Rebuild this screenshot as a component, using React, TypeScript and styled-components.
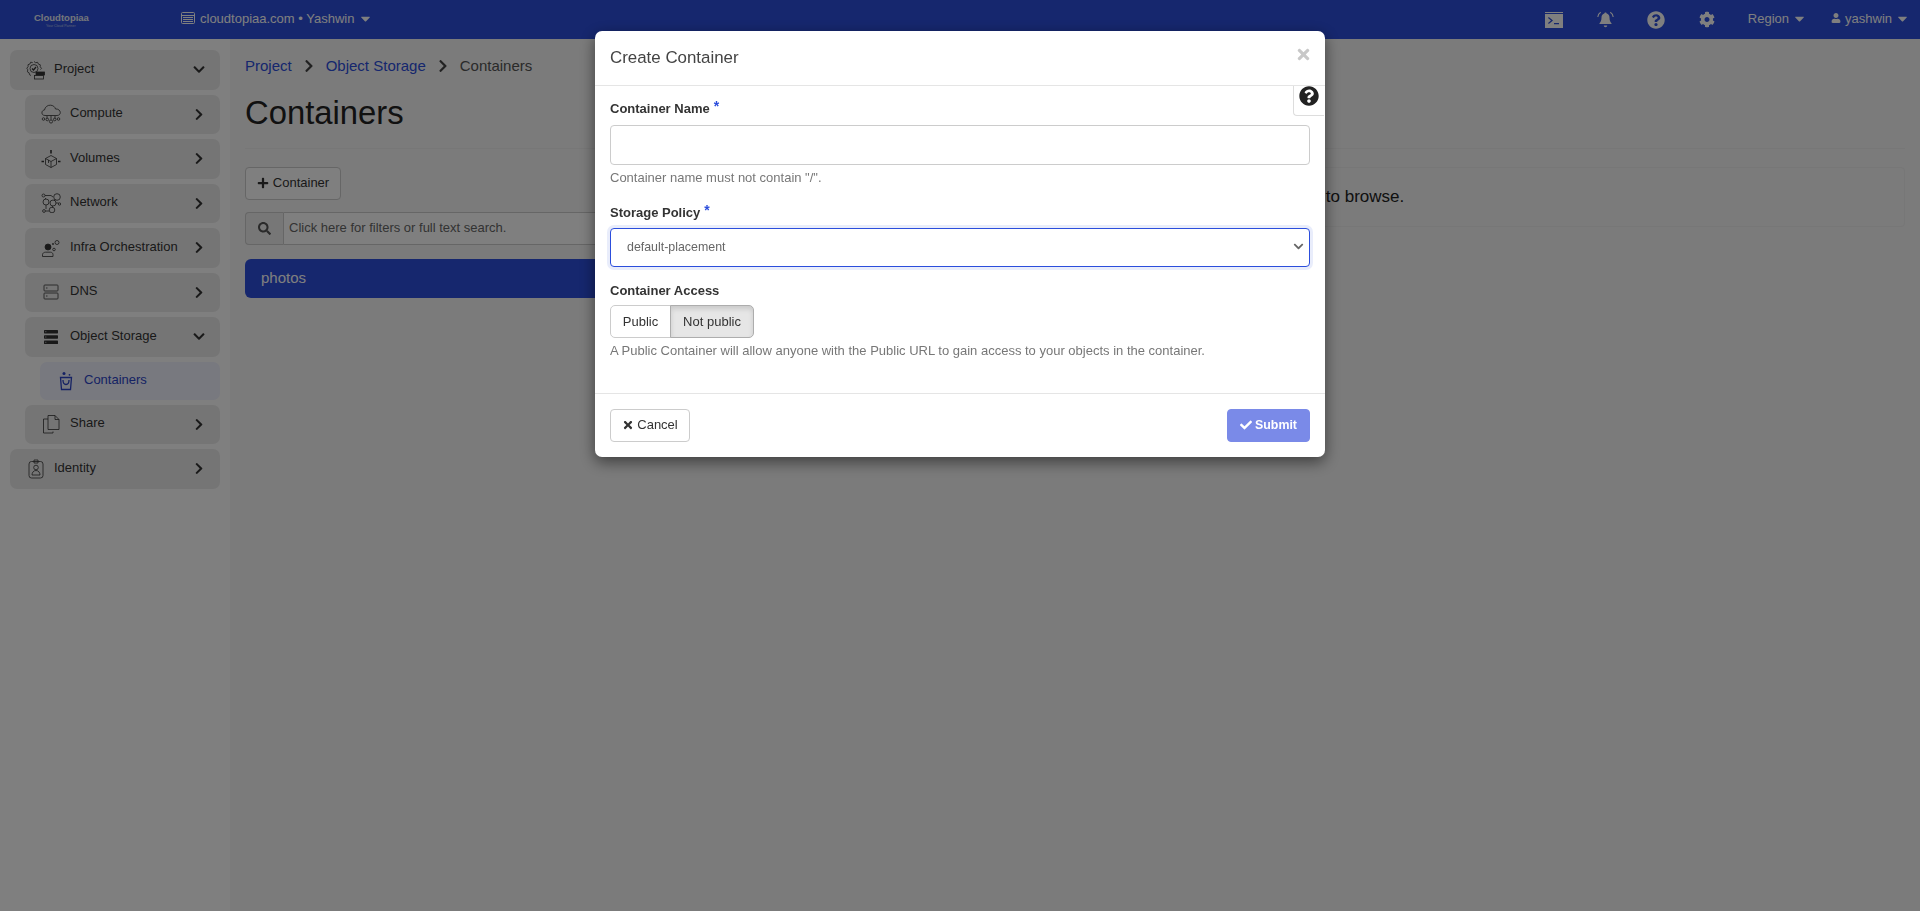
import React from "react";
import styled, { createGlobalStyle } from "styled-components";
import { FaCaretDown, FaChevronDown, FaChevronRight, FaCheck, FaCog, FaPlus, FaQuestionCircle, FaSearch, FaTimes, FaUser } from "react-icons/fa";

const Global = createGlobalStyle`
  html, body { margin: 0; height: 100%; background: #fff; }
  body { font-family: "Liberation Sans", Arial, sans-serif; font-size: 13px; color: #333; overflow: hidden; }
  * { box-sizing: border-box; }
`;

const Shell = styled.div`display: flex; flex-direction: column; height: 100vh;`;
const TopBar = styled.header`
  flex: 0 0 39px; display: flex; align-items: center; padding: 0 10px 0 34px;
  background: #2c4edc; color: #fff;
`;
const Logo = styled.div`width: 147px; display: flex; flex-direction: column; line-height: 1; padding-top: 2px;`;
const LogoName = styled.span`font-size: 9.5px; font-weight: 700; color: #e8ecf6;`;
const LogoTag = styled.span`font-size: 3.5px; margin: 2px 0 0 12px; color: #b9c4ec;`;
const Project = styled.div`display: flex; align-items: center; gap: 5px; padding-bottom: 3px;`;
const Caret = styled.span`display: flex; margin-left: -1px; font-size: 15px;`;
const TopRight = styled.div`margin-left: auto; display: flex; align-items: center;`;
const TopIcon = styled.span<{ $w: number; $gap: number }>`
  display: flex; width: ${(p) => p.$w}px; margin-right: ${(p) => p.$gap}px; justify-content: center; color: #fff;
`;
const TopMenu = styled.span<{ $gap?: number }>`
  display: flex; align-items: center; gap: 4px; padding-bottom: 3px; margin-right: ${(p) => p.$gap ?? 0}px;
`;
const Columns = styled.div`flex: 1; display: flex; min-height: 0;`;
const Sidebar = styled.nav`width: 230px; flex: none; padding-top: 11px; background: #fff;`;
const SideItem = styled.div<{ $indent?: number; $active?: boolean; $h?: number; $gap?: number }>`
  display: flex; align-items: center; gap: ${(p) => p.$gap ?? 8}px;
  height: ${(p) => p.$h ?? 39.5}px; margin: 0 10px 5px ${(p) => 10 + (p.$indent ?? 0)}px; padding: 0 15px 0 16px;
  border-radius: 7px; background: ${(p) => (p.$active ? "#f0f2fe" : "#ebebeb")};
  color: ${(p) => (p.$active ? "#2c45c8" : "#333")};
`;
const SideLabel = styled.span`flex: 1; padding-bottom: 3px; white-space: nowrap;`;
const Icon = styled.svg`width: 20px; height: 20px; flex: none; fill: none; stroke: currentColor; stroke-width: 0.8;`;
const Chev = styled.span`display: flex; width: 12px; justify-content: center; color: #333; font-size: 13px;`;

const Main = styled.main`flex: 1; min-width: 0; padding: 17px 15px 0; background: #f6f6f6;`;
const Crumbs = styled.div`display: flex; align-items: center; gap: 12px; font-size: 15px; line-height: 20px; color: #555;`;
const Crumb = styled.a`color: #2c4edc;`;
const CrumbSep = styled.span`display: flex; width: 10px; justify-content: center; color: #444; font-size: 14px;`;
const Title = styled.h1`margin: 17px 0 0; font-size: 32.8px; line-height: 40px; font-weight: 400; color: #222;`;
const Rule = styled.hr`margin: 15px 0 18px; border: 0; border-top: 1px solid #eee;`;
const Split = styled.div`display: grid; grid-template-columns: 700px 1fr; column-gap: 20px; align-items: start;`;
const AddButton = styled.button`
  display: flex; align-items: center; justify-content: center; gap: 4px; width: 96px; height: 33px;
  border: 1px solid #ccc; border-radius: 4px; background: #fff; color: #333; font: inherit; padding: 0 0 2px;
`;
const SearchGroup = styled.div`display: flex; height: 33px; margin-top: 12px;`;
const SearchAddon = styled.span`
  width: 38px; display: flex; align-items: center; justify-content: center; color: #555; font-size: 13px;
  border: 1px solid #ccc; border-right: 0; border-radius: 4px 0 0 4px; background: #eee;
`;
const SearchInput = styled.input`
  flex: 1; border: 1px solid #ccc; border-radius: 0 4px 4px 0; padding: 0 5px 3px; background: #fff; font: 13px "Liberation Sans", Arial, sans-serif;
  &::placeholder { color: #666; opacity: 1; }
`;
const ListHead = styled.div`
  display: flex; align-items: center; height: 39px; margin-top: 14px; padding: 0 16px 3px; border-radius: 6px;
  background: #2c4edc; color: #fff; font-size: 15px;
`;
const Browse = styled.div`
  display: flex; align-items: center; height: 60px; padding: 0 0 0 219px; border: 1px solid #eee; border-radius: 4px;
  background: #f6f6f6; font-size: 17px; color: #222;
`;

const Backdrop = styled.div`position: fixed; inset: 0; background: rgba(0, 0, 0, 0.5);`;
const Modal = styled.form`
  position: fixed; top: 31px; left: 595px; width: 730px; height: 426px; display: flex; flex-direction: column;
  background: #fff; border-radius: 7px; box-shadow: 0 5px 15px rgba(0, 0, 0, 0.5);
`;
const ModalHead = styled.div`
  flex: 0 0 55px; display: flex; align-items: center; justify-content: space-between; padding: 0 13px 0 15px;
  border-bottom: 1px solid #e5e5e5;
`;
const ModalTitle = styled.h2`margin: 0; font-size: 16.9px; font-weight: 400; color: #444;`;
const Close = styled.span`display: flex; color: #c8c8c8; font-size: 17px; margin-bottom: 7px;`;
const HelpTab = styled.span`
  position: absolute; top: 55px; right: 1px; width: 31px; height: 30px; display: flex; justify-content: center;
  background: #fff; border: 1px solid #ddd; border-top: 0; border-right: 0; border-radius: 0 0 0 4px;
  color: #222; font-size: 20px;
`;
const ModalBody = styled.div`flex: 1; padding: 14px 15px 0; display: flex; flex-direction: column;`;
const Label = styled.label<{ $after?: number }>`display: block; font-weight: 700; font-size: 13px; line-height: 18px; color: #333; margin-bottom: ${(p) => p.$after ?? 7}px;`;
const Required = styled.sup`color: #2c4edc; font-size: 14px; line-height: 0; margin-left: 4px; top: -2px; position: relative; vertical-align: baseline;`;
const TextInput = styled.input`
  display: block; width: 100%; height: 40px; border: 1px solid #ccc; border-radius: 4px; background: #fff; padding: 0 16px;
`;
const Hint = styled.p<{ $top: number; $after: number }>`margin: ${(p) => p.$top}px 0 ${(p) => p.$after}px; font-size: 13px; line-height: 16px; color: #777;`;
const SelectWrap = styled.div`position: relative; margin-bottom: 15px;`;
const Select = styled.select`
  display: block; width: 100%; height: 39px; appearance: none; padding: 0 16px 1px; border: 1px solid #2c4edc; border-radius: 4px;
  background: #fff; color: #666; font: 12.4px "Liberation Sans", Arial, sans-serif; box-shadow: 0 0 0 3px rgba(44, 78, 220, 0.1); outline: 0;
`;
const SelectChev = styled.span`position: absolute; top: 13px; right: 6px; display: flex; color: #666; font-size: 11px;`;
const Toggle = styled.div`display: flex; width: 144px; height: 33px;`;
const ToggleBtn = styled.span<{ $on?: boolean; $w: number }>`
  width: ${(p) => p.$w}px; display: flex; align-items: center; justify-content: center; padding-bottom: 1px;
  border: 1px solid ${(p) => (p.$on ? "#adadad" : "#ccc")};
  border-radius: ${(p) => (p.$on ? "0 5px 5px 0" : "5px 0 0 5px")};
  background: ${(p) => (p.$on ? "#e6e6e6" : "#fff")};
  box-shadow: ${(p) => (p.$on ? "inset 0 3px 5px rgba(0,0,0,.125)" : "none")};
  ${(p) => (p.$on ? "margin-left: -1px;" : "")}
  color: #333;
`;
const ModalFoot = styled.div`
  flex: 0 0 64px; display: flex; align-items: center; justify-content: space-between; padding: 0 15px 0;
  border-top: 1px solid #e5e5e5;
`;
const CancelBtn = styled.button`
  display: flex; align-items: center; justify-content: center; gap: 3px; width: 80px; height: 33px; padding: 0 0 2px;
  background: #fff; border: 1px solid #ccc; border-radius: 4px; color: #333; font: inherit;
`;
const SubmitBtn = styled.button`
  display: flex; align-items: center; justify-content: center; gap: 3px; width: 83px; height: 33px; padding: 0 0 2px;
  background: #7a8ae8; border: 1px solid #7a8ae8; border-radius: 4px; color: #fff; font: 700 12.4px "Liberation Sans", Arial, sans-serif;
`;
const Glyph = styled.span`display: flex; font-size: 12px;`;

const ProjectIcon = () => (
  <Icon viewBox="0 0 20 20">
    <path d="M8 1.500l1.600 1.200 2-.4.8 1.800 1.900.7-.1 2 1.300 1.500-1 1.300M5 15.500l-1.500-.8-.4-1.900-1.700-1 .4-2-1-1.600 1.300-1.500-.1-2 1.900-.7.8-1.800 2 .4" />
    <circle cx="8" cy="8.500" r="4" />
    <path d="M6 8.500l1.500 1.500 2.500-3" strokeWidth="1.300" />
    <rect x="10" y="12" width="8.500" height="3" fill="currentColor" />
    <rect x="8.500" y="15.500" width="9" height="3.500" />
  </Icon>
);
const ComputeIcon = () => (
  <Icon viewBox="0 0 20 20">
    <path d="M4 11.500C1.500 11.500.5 9.500 1 8c.4-1.400 1.500-2 2.500-2C4 3 6.500 1 9.500 1.200c2.500.1 4.500 1.600 5 3.800 2.600-.3 4.800 1.500 4.800 3.500 0 1.800-1.300 3-3.300 3z" />
    <path d="M10 11.500v4M6 12v2.500M14 12v2.500" />
    <circle cx="2.500" cy="15" r="1.300" /><circle cx="6.300" cy="15.500" r="1.300" /><circle cx="10" cy="17.500" r="1.600" />
    <circle cx="13.700" cy="15.500" r="1.300" /><circle cx="17.500" cy="15" r="1.300" />
  </Icon>
);
const VolumesIcon = () => (
  <Icon viewBox="0 0 20 20">
    <path d="M10 6.500l5.500 3v6L10 18.500l-5.500-3v-6zM4.500 9.500l5.500 3 5.500-3M10 12.500v6M7.500 11v3" />
    <path d="M10 1v3.500" strokeWidth="1.600" />
    <path d="M.5 12.500h2.500M17 12.500h2.500" strokeWidth="1.400" />
  </Icon>
);
const NetworkIcon = () => (
  <Icon viewBox="0 0 20 20">
    <circle cx="2.500" cy="2.500" r="1.500" /><circle cx="16" cy="4" r="3.300" /><circle cx="5" cy="9" r="3" />
    <circle cx="12" cy="10" r="3" /><circle cx="11" cy="17" r="2.800" /><circle cx="3" cy="18" r="1.400" /><circle cx="18.500" cy="11" r="1.200" />
    <path d="M4 2.500h6l2 1.500M4 5l1 1M13 7.500l1.500-1M15 10h2.500M11.500 13v1.500M4.500 18h3.500M5 12v4" />
  </Icon>
);
const InfraIcon = () => (
  <Icon viewBox="0 0 20 20">
    <circle cx="7" cy="9" r="3" fill="currentColor" />
    <path d="M1.500 18.500v-1.800c0-1.500 1.500-2.500 3-2.500h5c1.500 0 2.500 1 2.500 2.500v1.800z" />
    <circle cx="16" cy="4.500" r="2" /><circle cx="13" cy="11.500" r="1.300" /><circle cx="12" cy="6" r="0.700" />
  </Icon>
);
const DnsIcon = () => (
  <Icon viewBox="0 0 20 20">
    <rect x="3" y="3" width="14" height="6" rx="0.800" /><rect x="3" y="11" width="14" height="6" rx="0.800" />
    <path d="M5 6h1.500M5 14h1.500" />
  </Icon>
);
const StorageIcon = () => (
  <Icon viewBox="0 0 20 20">
    <rect x="3" y="3" width="14" height="3.400" rx="0.600" fill="currentColor" stroke="none" />
    <rect x="3" y="8.300" width="14" height="3.400" rx="0.600" fill="currentColor" stroke="none" />
    <rect x="3" y="13.600" width="14" height="3.400" rx="0.600" fill="currentColor" stroke="none" />
    <path d="M4.300 4.700h1M4.300 10h1M4.300 15.300h1" stroke="#ebebeb" />
  </Icon>
);
const BucketIcon = () => (
  <Icon viewBox="0 0 20 20" style={{ strokeWidth: 1.3 }}>
    <path d="M4.500 6.500h11l-1 12h-9z" />
    <path d="M7 9c0 3 1.200 4.500 3 4.500s3-1.500 3-4.500" />
    <circle cx="8" cy="2.500" r="1.500" fill="currentColor" stroke="none" /><circle cx="13.500" cy="3.800" r="0.900" fill="currentColor" stroke="none" />
  </Icon>
);
const ShareIcon = () => (
  <Icon viewBox="0 0 20 20">
    <path d="M7 1.500h7l4 4v10H7zM14 1.500v4h4" />
    <path d="M7 5H2.500v14H12v-1.500" />
  </Icon>
);
const IdentityIcon = () => (
  <Icon viewBox="0 0 20 20">
    <rect x="3" y="2.500" width="14" height="16.500" rx="2.500" />
    <circle cx="10" cy="8.500" r="2.300" />
    <path d="M6 16c0-2.500 1.500-4.500 4-4.500s4 2 4 4.500zM8 1h4v3H8z" />
  </Icon>
);
const SiteIcon = () => (
  <svg width="14" height="12" viewBox="0 0 14 12">
    <rect x="0.500" y="0.500" width="13" height="11" rx="1" fill="none" stroke="#fff" />
    <path d="M0 3h14v1H0zM2 5h10v1H2zM2 7h10v1H2zM2 9h10v1H2z" fill="#fff" />
  </svg>
);
const TerminalIcon = () => (
  <svg width="18" height="16" viewBox="0 0 18 16">
    <path fill="#fff" fillRule="evenodd" d="M0 0h18v1H0zM0 2h18v14H0zM3 6l3 2.500L3 11l.8 1L8 8.500 3.800 5zM9 11v1.300h5V11z" />
  </svg>
);
const BellIcon = () => (
  <svg width="17" height="17" viewBox="0 0 17 17">
    <path fill="#fff" d="M8.500 1.500c.7 0 1.100.4 1.100 1 1.900.5 2.900 2 2.900 4 0 3 .8 4.500 2 5.800v.7h-12v-.7c1.200-1.300 2-2.800 2-5.800 0-2 1-3.500 2.900-4 0-.6.400-1 1.100-1zM6.800 14.500h3.400c0 1-.7 1.700-1.700 1.700s-1.700-.7-1.700-1.700z" />
    <path fill="none" stroke="#fff" strokeWidth="1.100" d="M3.700 1.200C2 2.300 1 4 .8 6M13.300 1.200c1.700 1.100 2.700 2.800 2.900 4.800" />
  </svg>
);

const items = [
  { label: "Compute", icon: <ComputeIcon /> },
  { label: "Volumes", icon: <VolumesIcon /> },
  { label: "Network", icon: <NetworkIcon /> },
  { label: "Infra Orchestration", icon: <InfraIcon /> },
  { label: "DNS", icon: <DnsIcon /> },
];

const App = () => (
  <Shell>
    <Global />
    <TopBar>
      <Logo><LogoName>Cloudtopiaa</LogoName><LogoTag>Your Cloud Partner</LogoTag></Logo>
      <Project><SiteIcon /><span>cloudtopiaa.com • Yashwin</span><Caret><FaCaretDown /></Caret></Project>
      <TopRight>
        <TopIcon $w={18} $gap={34}><TerminalIcon /></TopIcon>
        <TopIcon $w={17} $gap={33}><BellIcon /></TopIcon>
        <TopIcon $w={18} $gap={34}><FaQuestionCircle size={18} /></TopIcon>
        <TopIcon $w={16} $gap={33}><FaCog size={17} /></TopIcon>
        <TopMenu $gap={24}>Region<Caret><FaCaretDown /></Caret></TopMenu>
        <TopMenu><FaUser size={10} />yashwin<Caret><FaCaretDown /></Caret></TopMenu>
      </TopRight>
    </TopBar>
    <Columns>
      <Sidebar>
        <SideItem><ProjectIcon /><SideLabel>Project</SideLabel><Chev><FaChevronDown /></Chev></SideItem>
        {items.map((it) => (
          <SideItem key={it.label} $indent={15} $gap={9}>{it.icon}<SideLabel>{it.label}</SideLabel><Chev><FaChevronRight /></Chev></SideItem>
        ))}
        <SideItem $indent={15} $gap={9}><StorageIcon /><SideLabel>Object Storage</SideLabel><Chev><FaChevronDown /></Chev></SideItem>
        <SideItem $indent={30} $active $h={38}><BucketIcon /><SideLabel>Containers</SideLabel></SideItem>
        <SideItem $indent={15} $gap={9}><ShareIcon /><SideLabel>Share</SideLabel><Chev><FaChevronRight /></Chev></SideItem>
        <SideItem><IdentityIcon /><SideLabel>Identity</SideLabel><Chev><FaChevronRight /></Chev></SideItem>
      </Sidebar>
      <Main>
        <Crumbs>
          <Crumb>Project</Crumb><CrumbSep><FaChevronRight /></CrumbSep>
          <Crumb>Object Storage</Crumb><CrumbSep><FaChevronRight /></CrumbSep>
          <span>Containers</span>
        </Crumbs>
        <Title>Containers</Title>
        <Rule />
        <Split>
          <div>
            <AddButton type="button"><Glyph><FaPlus /></Glyph>Container</AddButton>
            <SearchGroup>
              <SearchAddon><FaSearch /></SearchAddon>
              <SearchInput placeholder="Click here for filters or full text search." />
            </SearchGroup>
            <ListHead>photos</ListHead>
          </div>
          <Browse>Select a container to browse.</Browse>
        </Split>
      </Main>
    </Columns>
    <Backdrop />
    <Modal>
      <ModalHead>
        <ModalTitle>Create Container</ModalTitle>
        <Close><FaTimes /></Close>
      </ModalHead>
      <HelpTab><FaQuestionCircle /></HelpTab>
      <ModalBody>
        <Label>Container Name<Required>*</Required></Label>
        <TextInput />
        <Hint $top={5} $after={18}>Container name must not contain "/".</Hint>
        <Label $after={6}>Storage Policy<Required>*</Required></Label>
        <SelectWrap>
          <Select defaultValue="default-placement"><option>default-placement</option></Select>
          <SelectChev><FaChevronDown /></SelectChev>
        </SelectWrap>
        <Label $after={5}>Container Access</Label>
        <Toggle>
          <ToggleBtn $w={61}>Public</ToggleBtn>
          <ToggleBtn $w={84} $on>Not public</ToggleBtn>
        </Toggle>
        <Hint $top={5} $after={0}>A Public Container will allow anyone with the Public URL to gain access to your objects in the container.</Hint>
      </ModalBody>
      <ModalFoot>
        <CancelBtn type="button"><Glyph><FaTimes /></Glyph>Cancel</CancelBtn>
        <SubmitBtn type="button"><Glyph><FaCheck /></Glyph>Submit</SubmitBtn>
      </ModalFoot>
    </Modal>
  </Shell>
);

export default App;
